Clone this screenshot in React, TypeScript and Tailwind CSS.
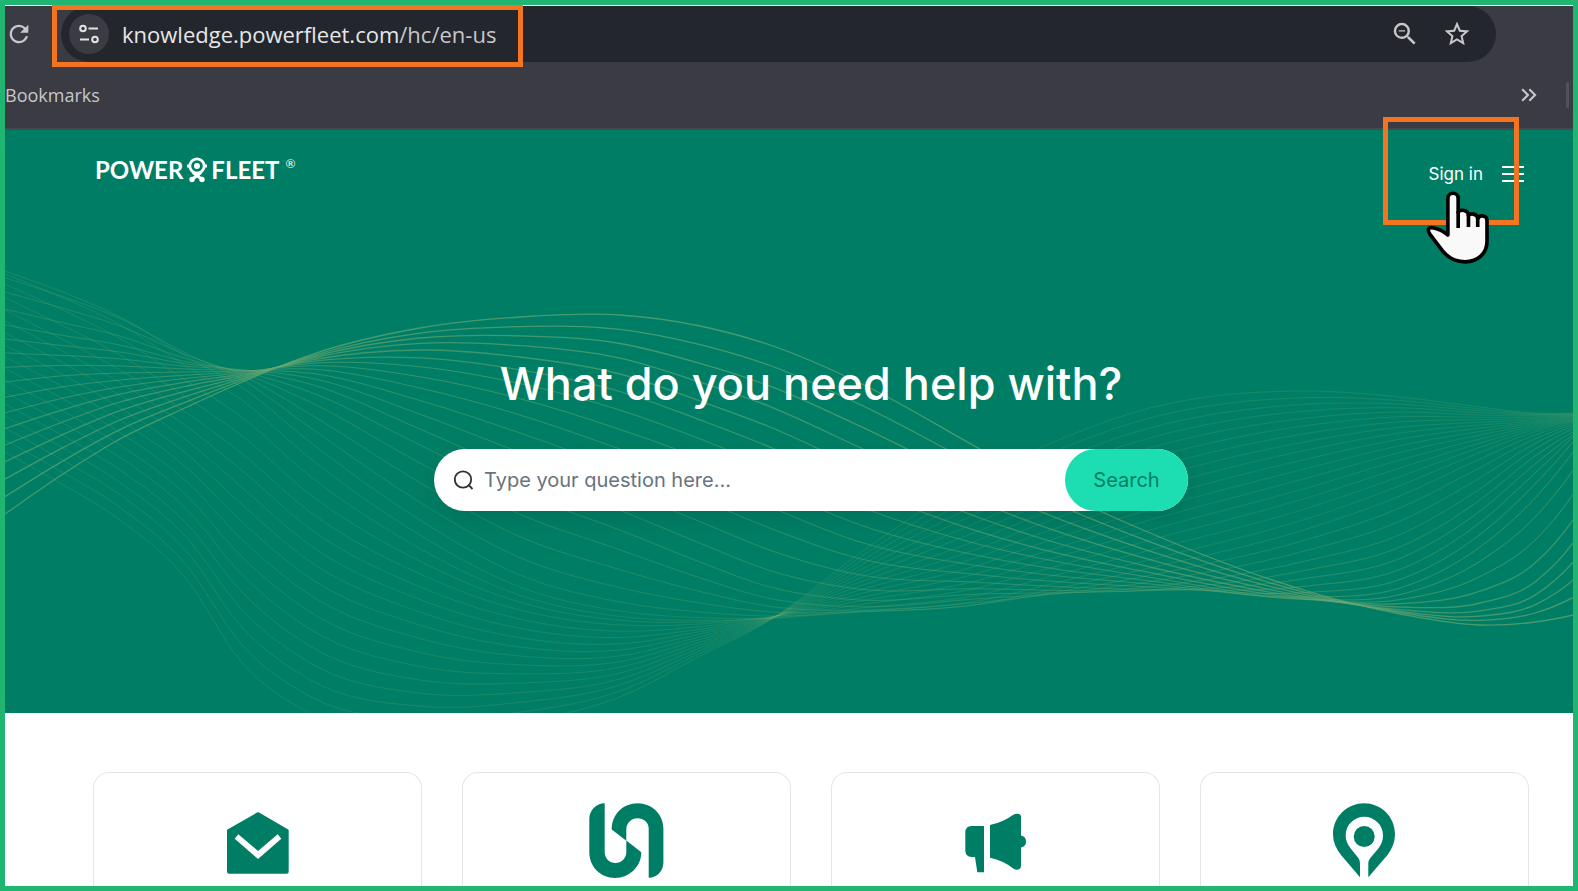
import React from "react";
import {
  MdKeyboardDoubleArrowRight,
  MdOutlineZoomOut,
  MdRefresh,
  MdStarBorder,
} from "react-icons/md";

/* ---------- wave backdrop ---------- */

const LINE_COUNT = 33;

// Each column: [x, heights of lines 0, 4, 8 … 32]
const COLUMNS: [number, number[]][] = [
  [5, [514, 445, 382, 325, 271, 310, 357, 404, 452]],
  [60, [476, 423, 376, 335, 291, 338, 385, 434, 483]],
  [120, [439, 402, 373, 345, 317, 370, 420, 470, 520]],
  [187, [407, 386, 372, 362, 357, 413, 468, 524, 580]],
  [240, [383, 376, 371, 371, 386, 452, 520, 590, 660]],
  [310, [355, 360, 369, 392, 442, 512, 578, 646, 713]],
  [420, [328, 350, 388, 445, 520, 574, 625, 680, 732]],
  [520, [317, 357, 415, 493, 575, 610, 647, 683, 722]],
  [620, [315, 374, 449, 530, 602, 625, 650, 673, 697]],
  [700, [326, 401, 478, 562, 612, 624, 634, 645, 656]],
  [770, [345, 427, 507, 587, 616, 617, 618, 619, 620]],
  [860, [383, 468, 542, 600, 612, 601, 586, 570, 553]],
  [980, [449, 518, 566, 594, 604, 580, 548, 512, 476]],
  [1040, [482, 538, 574, 593, 592, 562, 524, 486, 448]],
  [1150, [533, 567, 584, 590, 568, 530, 489, 448, 408]],
  [1307, [591, 598, 597, 570, 529, 488, 450, 418, 391]],
  [1400, [614, 607, 588, 547, 496, 460, 433, 412, 397]],
  [1480, [625, 603, 547, 500, 459, 439, 425, 415, 407]],
  [1535, [622, 582, 498, 456, 435, 426, 421, 416, 413]],
  [1573, [615, 543, 452, 432, 423, 420, 417, 415, 413]],
];

function heightAt(keys: number[], line: number): number {
  const p = line / 4;
  const i = Math.min(Math.floor(p), keys.length - 2);
  const t = p - i;
  const b = keys[i];
  const c = keys[i + 1];
  const a = i > 0 ? keys[i - 1] : 2 * b - c;
  const d = i + 2 < keys.length ? keys[i + 2] : 2 * c - b;
  return (
    b +
    0.5 * t * (c - a + t * (2 * a - 5 * b + 4 * c - d + t * (3 * (b - c) + d - a)))
  );
}

function wavePath(line: number): string {
  const pts = COLUMNS.map(([x, keys]) => [x - 5, heightAt(keys, line) - 130]);
  const last = pts.length - 1;
  const secant = (i: number) =>
    (pts[i + 1][1] - pts[i][1]) / (pts[i + 1][0] - pts[i][0]);
  const slope = pts.map((p, i) => {
    if (i === 0) return secant(0);
    if (i === last) {
      return secant(last - 1) * 1.5 - secant(last - 2) * 0.5;
    }
    const before = p[0] - pts[i - 1][0];
    const after = pts[i + 1][0] - p[0];
    return (secant(i - 1) * after + secant(i) * before) / (before + after);
  });
  let d = `M${pts[0][0]} ${pts[0][1].toFixed(1)}`;
  for (let i = 1; i < pts.length; i++) {
    const h = (pts[i][0] - pts[i - 1][0]) / 3;
    d += `C${(pts[i - 1][0] + h).toFixed(1)} ${(pts[i - 1][1] + h * slope[i - 1]).toFixed(1)} ${(pts[i][0] - h).toFixed(1)} ${(pts[i][1] - h * slope[i]).toFixed(1)} ${pts[i][0]} ${pts[i][1].toFixed(1)}`;
  }
  return d;
}

const WAVES = Array.from({ length: LINE_COUNT }, (_, i) => ({
  d: wavePath(i),
  opacity: Math.max(0.24, 0.68 - i * 0.026),
  width: i < 6 ? 1.3 : 1,
}));

function Waves() {
  return (
    <svg
      className="absolute inset-0 h-full w-full"
      viewBox="0 0 1568 583"
      preserveAspectRatio="xMidYMid slice"
      fill="none"
      stroke="#6aa872"
      aria-hidden="true"
    >
      {WAVES.map((w, i) => (
        <path key={i} d={w.d} strokeOpacity={w.opacity} strokeWidth={w.width} />
      ))}
    </svg>
  );
}

/* ---------- icons ---------- */

function TuneIcon() {
  return (
    <svg className="h-5 w-5" viewBox="0 0 20 20" fill="none" stroke="#e3e3e6" strokeWidth="2" aria-hidden="true">
      <circle cx="4" cy="4.5" r="2.8" />
      <path d="M9.5 4.5H19M1 15.5h9" />
      <circle cx="16" cy="15.5" r="2.8" />
    </svg>
  );
}

function LogoMark() {
  return (
    <svg className="h-[26px] w-5" viewBox="0 0 20 26" fill="none" stroke="#fff" aria-hidden="true">
      <circle cx="10" cy="9" r="7.2" strokeWidth="2.8" />
      <circle cx="10" cy="9" r="3" fill="#fff" stroke="none" />
      <path d="M1 7.5v3M19 7.5v3" strokeWidth="2" />
      <path d="M6 15.5L14.5 22M14 15.5L5.5 22" strokeWidth="3" />
      <circle cx="5" cy="22.5" r="2.7" fill="#fff" stroke="none" />
      <circle cx="15" cy="22.5" r="2.7" fill="#fff" stroke="none" />
    </svg>
  );
}

function SearchIcon() {
  return (
    <svg className="h-5 w-5 shrink-0" viewBox="0 0 20 20" fill="none" stroke="#2b3238" strokeWidth="1.8" aria-hidden="true">
      <circle cx="9" cy="9.500" r="8.2" />
      <path d="M14.200 14.700L18.500 19" />
    </svg>
  );
}

function HandCursor() {
  return (
    <svg
      className="absolute top-[186px] right-[84px] h-[73px] w-[63px]"
      viewBox="0 0 190 219"
      fill="#f9f9f9"
      stroke="#000"
      strokeWidth="11"
      strokeLinejoin="round"
      aria-hidden="true"
    >
      <path d="M66 132V22C66 1 97 1 97 22V64C103 54 128 55 128 74C133 65 156 67 156 83C161 70 184 72 184 88V152C184 188 156 213 118 213C88 213 66 200 50 180L12 130C2 114 8 107 24 111C38 114 52 121 66 132Z" />
      <path d="M97 60V111M128 72V108M156 80V108" fill="none" />
    </svg>
  );
}

function MailIcon() {
  return (
    <svg className="h-[75px] w-[75px]" viewBox="0 0 75 75" aria-hidden="true">
      <path
        fill="#007e65"
        fillRule="evenodd"
        d="M37 9.6Q38 9 39 9.6L68.200 26.600Q68.700 27 68.700 27.600V68.700Q68.700 70.700 66.700 70.700H9Q7 70.700 7 68.700V27.600Q7 27 7.500 26.600ZM14.700 35.700L38 56L61.300 35.700L57.700 31.300L38 48L18.300 31.300Z"
      />
    </svg>
  );
}

function UnityIcon() {
  return (
    <svg className="h-[75px] w-[75px]" viewBox="0 0 75 75" fill="#007e65" aria-hidden="true">
      <path d="M15.700 .3C7 .3 .3 7.500 .3 16V49.500C.3 63.500 11.500 75 26 75C40.500 75 52.300 63.500 52.300 49.300L37.300 37.500V49.300C37.300 55.500 32.300 60 26.500 60C20.500 60 15.700 55.500 15.700 49.300Z" />
      <path d="M59.700 74.700C68 74.700 74.400 68 74.400 59.500V25.500C74.400 11.500 63 .3 48.700 .3C34 .3 22.700 11.500 22.700 26.500L37.300 37.800V26.500C37.300 20 42.500 15.300 48.500 15.300C54.500 15.300 59.700 19.500 59.700 25.500Z" />
    </svg>
  );
}

function MegaphoneIcon() {
  return (
    <svg className="h-[75px] w-[75px]" viewBox="0 0 75 75" fill="#007e65" aria-hidden="true">
      <path d="M26 23H13.500Q7.300 23 7.300 29.500V47.500Q7.300 54 13.500 54H17L19.300 69.300H26Z" />
      <path d="M32 22Q45.500 19 54.500 12.200Q56.300 10.700 58.500 10.700Q63 10.400 63 14V32.500Q68 33.500 68 38.500Q68 43.500 63 44.500V63Q63 66.700 58.500 66.700Q56.300 66.500 54.500 65Q45.500 57.700 32 54.700Z" />
    </svg>
  );
}

function PinIcon() {
  return (
    <svg className="h-[75px] w-[75px]" viewBox="0 0 75 75" fill="#007e65" aria-hidden="true">
      <path d="M33 74.300L14 52Q6 42 6 31.300C6 14 20 .3 37 .3C54.500 .3 68 14 68 31.300Q68 42 60.500 52L41.300 74.300V60.500Q41.300 57.500 43.300 55L51.500 45.300Q56 39.500 56 32.300C56 22 47.500 13.800 37.300 13.800C27 13.800 18.700 22 18.700 32.300Q18.700 39.500 23.500 45.300L31 54.500Q33 57 33 60Z" />
      <circle cx="37.200" cy="33.500" r="10.500" />
    </svg>
  );
}

/* ---------- page ---------- */

const CARDS = [
  { label: "Contact", Icon: MailIcon },
  { label: "Unity", Icon: UnityIcon },
  { label: "Announcements", Icon: MegaphoneIcon },
  { label: "Tracking", Icon: PinIcon },
];

function BrowserBar() {
  return (
    <div className="shrink-0 border-t border-b-2 border-t-white border-b-[#48484c] bg-[#3a3b43] font-['Open_Sans',sans-serif] text-[#c7c7ca]">
      <div className="flex h-14 items-center pr-[77px]">
        <button type="button" aria-label="Reload" className="flex w-14 shrink-0 items-center">
          <MdRefresh className="h-7 w-7" />
        </button>
        <div className="flex h-full min-w-0 flex-1 items-center rounded-full bg-[#24262d] pr-6 pl-2">
          <button
            type="button"
            aria-label="Site information"
            className="flex h-10 w-10 shrink-0 items-center justify-center rounded-full bg-[#3a3b43]"
          >
            <TuneIcon />
          </button>
          <div className="min-w-0 flex-1 truncate pl-[13px] text-[22px] leading-8">
            <span className="text-[#e6e6e8]">knowledge.powerfleet.com</span>/hc/en-us
          </div>
          <div className="flex items-center gap-[22px]">
            <button type="button" aria-label="Zoom out">
              <MdOutlineZoomOut className="h-[30px] w-[30px]" />
            </button>
            <button type="button" aria-label="Bookmark this page">
              <MdStarBorder className="h-[30px] w-[30px]" />
            </button>
          </div>
        </div>
      </div>
      <div className="flex h-[66px] items-center pr-1">
        <span className="flex-1 text-lg">Bookmarks</span>
        <button type="button" aria-label="More bookmarks" className="mr-6">
          <MdKeyboardDoubleArrowRight className="h-[26px] w-[26px]" />
        </button>
        <span className="h-[26px] w-[3px] rounded-full bg-[#505159]" />
      </div>
    </div>
  );
}

function Hero() {
  return (
    <section className="relative shrink-0 overflow-hidden bg-[#007e65] pr-11 pb-[202px] pl-[88px] text-white">
      <Waves />
      <div className="relative">
        <header className="flex h-[88px] items-center justify-between pr-[5px]">
          <a
            href="#home"
            aria-label="Powerfleet"
            className="flex items-center gap-1 pb-2 pl-[2px] font-['Lato',sans-serif] text-2xl font-bold"
          >
            <span>POWER</span>
            <LogoMark />
            <span>FLEET</span>
            <span className="self-start pt-[2px] pl-[2px] text-xs font-normal">®</span>
          </a>
          <div className="flex items-center gap-[19px]">
            <a href="#signin" className="text-[17px] leading-6">
              Sign in
            </a>
            <button type="button" aria-label="Menu" className="flex w-[22px] flex-col gap-[5px]">
              <span className="h-[2px] bg-white" />
              <span className="h-[2px] bg-white" />
              <span className="h-[2px] bg-white" />
            </button>
          </div>
        </header>
        <h1 className="pt-[136px] text-center text-[45px] leading-[60px] font-medium">
          What do you need help with?
        </h1>
        <form
          role="search"
          className="mx-auto mt-[35px] flex h-[62px] max-w-[754px] items-center rounded-full bg-white pl-5 shadow-[0_8px_24px_rgba(0,0,0,0.1)]"
          onSubmit={(e) => e.preventDefault()}
        >
          <SearchIcon />
          <input
            type="search"
            aria-label="Search"
            placeholder="Type your question here..."
            className="h-full min-w-0 flex-1 bg-transparent pl-[10px] text-xl text-gray-800 outline-none placeholder:text-[#68737d]"
          />
          <button
            type="submit"
            className="h-full w-[123px] rounded-full bg-[#1cdeb2] text-xl text-[#007e65]"
          >
            Search
          </button>
        </form>
      </div>
    </section>
  );
}

export default function App() {
  return (
    <div className="relative flex h-screen flex-col overflow-hidden border-[5px] border-[#20b672] bg-white font-['Inter',sans-serif]">
      <BrowserBar />
      <Hero />
      <main className="grid min-h-0 flex-1 grid-cols-4 gap-10 pt-[59px] pr-11 pl-[88px]">
        {CARDS.map(({ label, Icon }) => (
          <a
            key={label}
            href="#topic"
            aria-label={label}
            className="flex justify-center rounded-t-2xl border border-b-0 border-[#e2e6ea] pt-[30px]"
          >
            <Icon />
          </a>
        ))}
      </main>
      <div className="pointer-events-none absolute top-0 left-[47px] h-[62px] w-[471px] border-[5px] border-[#f47421]" />
      <div className="pointer-events-none absolute top-[112px] right-[54px] h-[108px] w-[136px] border-[5px] border-[#f47421]" />
      <HandCursor />
    </div>
  );
}
